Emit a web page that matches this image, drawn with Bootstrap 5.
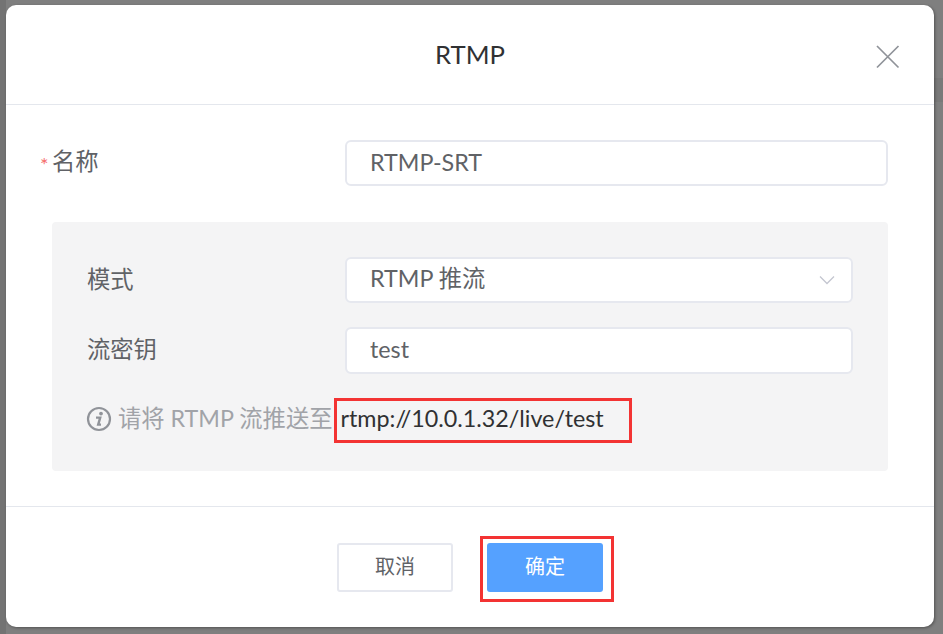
<!DOCTYPE html>
<html lang="zh">
<head>
<meta charset="utf-8">
<title>RTMP</title>
<link href="https://cdn.jsdelivr.net/npm/bootstrap@5.3.0/dist/css/bootstrap.min.css" rel="stylesheet">
<style>
html,body{height:100%;}
body{margin:0;overflow:hidden;background:linear-gradient(to right,#737373 6px,transparent 6px),linear-gradient(#7f7f7f 78px,#797979 78px,#797979 102px,#7f7f7f 102px);font-family:"Lato","Noto Sans CJK SC",sans-serif;font-size:23.3px;color:#606266;padding:5px 9px 7px 6px;}
.dlg{height:622px;border:0;border-radius:10px;background:#fff;box-shadow:1px 1px 3px rgba(0,0,0,.35);}
.dlg-head{height:100px;border-bottom:1px solid #e4e7ed;position:relative;}
.dlg-title{font-size:25.7px;color:#303133;line-height:1;margin:0;font-weight:400;padding-top:1px;}
.dlg-close{position:absolute;right:34px;top:40px;width:24px;height:24px;padding:0;border:0;background:none;display:flex;}
.dlg-body{padding:35px 46px 35px 34px;height:401px;}
.lbl{width:305px;flex:none;height:46px;line-height:42px;color:#606266;white-space:nowrap;}
.lbl-in{width:258px;flex:none;height:46px;line-height:44px;color:#606266;}
.req{color:#f56c6c;font-size:20px;line-height:1;display:inline-block;width:12px;vertical-align:-2px;}
.fld.form-control,.fld.form-select{height:46px;border:2px solid #e6e8ef;border-radius:6px;padding:0 23px 3px;font-size:23.3px;font-family:inherit;color:#606266;box-shadow:none;background-color:#fff;}
.fld.form-select{background-image:url("data:image/svg+xml,%3Csvg xmlns='http://www.w3.org/2000/svg' width='16' height='10' viewBox='0 0 16 10'%3E%3Cpath d='M1 1.5l7 7 7-7' fill='none' stroke='%23c4c6d0' stroke-width='1.3'/%3E%3C/svg%3E");background-position:right 16px center;background-size:16px 10px;}
.fld-in{height:47px!important;}
.panel{background:#f4f4f5;border-radius:4px;margin:36px 0 0 12px;padding:35px 35px 0;height:249px;}
.row-gap{margin-bottom:24px;}
.hint{color:#a1a3a8;margin-top:24px;line-height:1;height:45px;}
.hint-ico{margin-bottom:3px;margin-left:-1px;flex:none;}
.hint-txt{margin-left:6px;padding-bottom:3px;}
.url-box{border:3px solid #f33333;color:#303133;height:45px;width:298px;padding:0 0 3px 4px;margin-left:1px;display:flex;align-items:center;}
.dlg-foot{height:121px;border-top:1px solid #e4e7ed;padding:29px 0 0 331px;gap:27px;}
.btn.bt-c{width:116px;height:49px;border:2px solid #e6e8ef;border-radius:3px;background:#fff;color:#606266;font-size:20px;padding:0 0 3px;margin-top:7px;}
.btn.bt-o{width:116px;height:49px;border:0;border-radius:3px;background:#55a1ff;color:#fff;font-size:20px;padding:0 0 3px;}
.ok-box{border:3px solid #f33333;padding:4px;width:134px;height:66px;display:flex;}
</style>
</head>
<body>
<div class="modal-content dlg d-flex flex-column">
  <div class="dlg-head d-flex align-items-center justify-content-center">
    <h5 class="dlg-title">RTMP</h5>
    <button class="dlg-close" type="button" aria-label="close">
      <svg width="24" height="24" viewBox="0 0 24 24"><path d="M1 1l21.5 21.5M22.5 1L1 22.5" stroke="#909399" stroke-width="1.7" fill="none"/></svg>
    </button>
  </div>
  <div class="dlg-body">
    <div class="d-flex">
      <label class="lbl"><span class="req">*</span>名称</label>
      <input class="form-control fld" value="RTMP-SRT">
    </div>
    <div class="panel">
      <div class="d-flex row-gap">
        <label class="lbl-in">模式</label>
        <select class="form-select fld"><option>RTMP 推流</option></select>
      </div>
      <div class="d-flex">
        <label class="lbl-in">流密钥</label>
        <input class="form-control fld fld-in" value="test">
      </div>
      <div class="hint d-flex align-items-center">
        <svg class="hint-ico" width="26" height="26" viewBox="0 0 26 26"><circle cx="13" cy="13" r="11" fill="none" stroke="#909399" stroke-width="2.2"/><circle cx="15" cy="7.6" r="1.9" fill="#909399"/><path d="M10 11.6h4.2l-2 7h2.8" fill="none" stroke="#909399" stroke-width="2.4"/></svg>
        <span class="hint-txt">请将 RTMP 流推送至</span>
        <span class="url-box">rtmp://10.0.1.32/live/test</span>
      </div>
    </div>
  </div>
  <div class="dlg-foot d-flex align-items-start">
    <button class="btn bt-c" type="button">取消</button>
    <div class="ok-box"><button class="btn bt-o" type="button">确定</button></div>
  </div>
</div>
<script src="https://cdn.jsdelivr.net/npm/bootstrap@5.3.0/dist/js/bootstrap.bundle.min.js"></script>
</body>
</html>
